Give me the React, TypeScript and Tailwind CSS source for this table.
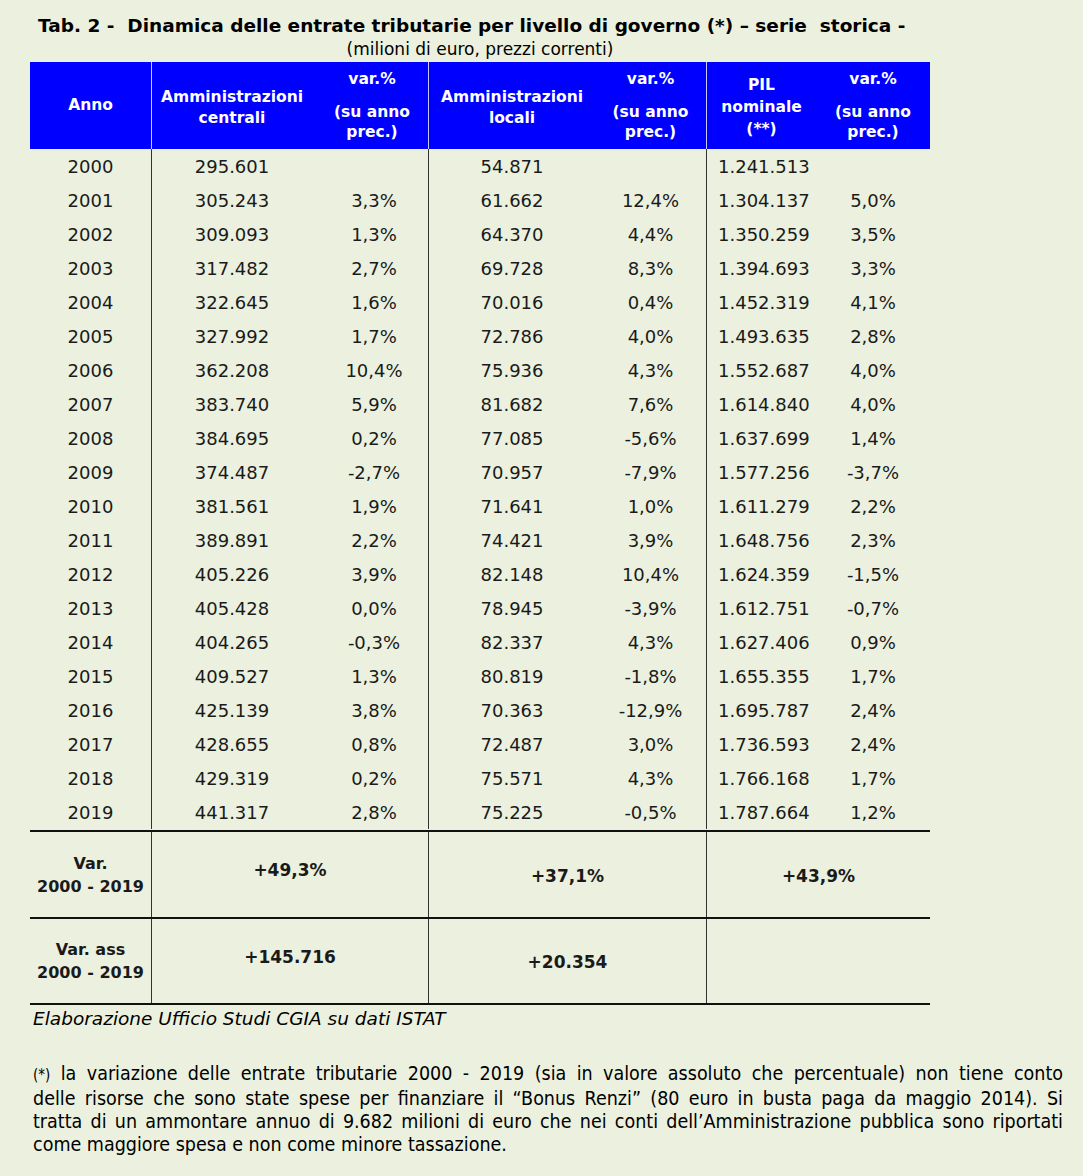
const rows: string[][] = [
  ["2000", "295.601", "", "54.871", "", "1.241.513", ""],
  ["2001", "305.243", "3,3%", "61.662", "12,4%", "1.304.137", "5,0%"],
  ["2002", "309.093", "1,3%", "64.370", "4,4%", "1.350.259", "3,5%"],
  ["2003", "317.482", "2,7%", "69.728", "8,3%", "1.394.693", "3,3%"],
  ["2004", "322.645", "1,6%", "70.016", "0,4%", "1.452.319", "4,1%"],
  ["2005", "327.992", "1,7%", "72.786", "4,0%", "1.493.635", "2,8%"],
  ["2006", "362.208", "10,4%", "75.936", "4,3%", "1.552.687", "4,0%"],
  ["2007", "383.740", "5,9%", "81.682", "7,6%", "1.614.840", "4,0%"],
  ["2008", "384.695", "0,2%", "77.085", "-5,6%", "1.637.699", "1,4%"],
  ["2009", "374.487", "-2,7%", "70.957", "-7,9%", "1.577.256", "-3,7%"],
  ["2010", "381.561", "1,9%", "71.641", "1,0%", "1.611.279", "2,2%"],
  ["2011", "389.891", "2,2%", "74.421", "3,9%", "1.648.756", "2,3%"],
  ["2012", "405.226", "3,9%", "82.148", "10,4%", "1.624.359", "-1,5%"],
  ["2013", "405.428", "0,0%", "78.945", "-3,9%", "1.612.751", "-0,7%"],
  ["2014", "404.265", "-0,3%", "82.337", "4,3%", "1.627.406", "0,9%"],
  ["2015", "409.527", "1,3%", "80.819", "-1,8%", "1.655.355", "1,7%"],
  ["2016", "425.139", "3,8%", "70.363", "-12,9%", "1.695.787", "2,4%"],
  ["2017", "428.655", "0,8%", "72.487", "3,0%", "1.736.593", "2,4%"],
  ["2018", "429.319", "0,2%", "75.571", "4,3%", "1.766.168", "1,7%"],
  ["2019", "441.317", "2,8%", "75.225", "-0,5%", "1.787.664", "1,2%"],
];

const cols = "grid grid-cols-[122px_160px_117px_166px_112px_109px_114px]";
const sumCols = "grid grid-cols-[122px_277px_278px_223px]";

const VarHead = () => (
  <div className="flex flex-col items-center pt-[7px] leading-[20px]">
    <span>var.%</span>
    <span className="mt-[13px]">(su anno</span>
    <span>prec.)</span>
  </div>
);

export default function App() {
  return (
    <div className="w-[1083px] h-[1176px] bg-[#ebf1de] text-[#1a1a1a] font-['DejaVu_Sans',sans-serif]">
      <h1 className="pl-[38px] pt-[14px] text-[18.5px] leading-[24px] font-bold text-black whitespace-pre">
        {"Tab. 2 -  Dinamica delle entrate tributarie per livello di governo (*) – serie  storica -"}
      </h1>
      <div className="w-[900px] ml-[30px]">
        <p className="text-center text-[17px] leading-[22px] text-black">(milioni di euro, prezzi correnti)</p>

        <div className={`${cols} mt-[2px] h-[87px] bg-[#0000ff] text-white font-bold text-[15.5px]`}>
          <div className="flex items-center justify-center border-r border-[#c8c8ff]">Anno</div>
          <div className="flex flex-col items-center justify-center leading-[21px] pt-[4px]">
            <span>Amministrazioni</span>
            <span>centrali</span>
          </div>
          <div className="border-r border-[#c8c8ff] pl-[4px]"><VarHead /></div>
          <div className="flex flex-col items-center justify-center leading-[21px] pt-[4px]">
            <span>Amministrazioni</span>
            <span>locali</span>
          </div>
          <div className="border-r border-[#c8c8ff]"><VarHead /></div>
          <div className="flex flex-col items-center justify-center leading-[22px] pt-[2px]">
            <span>PIL</span>
            <span>nominale</span>
            <span>(**)</span>
          </div>
          <VarHead />
        </div>

        <div className="text-[18px]">
          {rows.map((r) => (
            <div key={r[0]} className={`${cols} h-[34px] items-center`}>
              <div className="text-center h-full flex items-center justify-center border-r border-[#333]">{r[0]}</div>
              <div className="text-center">{r[1]}</div>
              <div className="text-center pl-[8px] h-full flex items-center justify-center border-r border-[#333]">{r[2]}</div>
              <div className="text-center">{r[3]}</div>
              <div className="text-center h-full flex items-center justify-center border-r border-[#333]">{r[4]}</div>
              <div className="pl-[11px]">{r[5]}</div>
              <div className="text-center">{r[6]}</div>
            </div>
          ))}
        </div>

        <div className="font-bold text-[17px] border-t-2 border-[#111] mt-[1px]">
          <div className={`${sumCols} h-[87px] border-b-2 border-[#111]`}>
            <div className="flex flex-col items-center justify-center leading-[23px] border-r border-[#333] text-[16px]">
              <span>Var.</span>
              <span>2000 - 2019</span>
            </div>
            <div className="flex items-center justify-center pb-[8px] border-r border-[#333]">+49,3%</div>
            <div className="flex items-center justify-center pt-[4px] border-r border-[#333]">+37,1%</div>
            <div className="flex items-center justify-center pt-[4px]">+43,9%</div>
          </div>
          <div className={`${sumCols} h-[86px] border-b-2 border-[#111]`}>
            <div className="flex flex-col items-center justify-center leading-[23px] border-r border-[#333] text-[16px]">
              <span>Var. ass</span>
              <span>2000 - 2019</span>
            </div>
            <div className="flex items-center justify-center pb-[6px] border-r border-[#333]">+145.716</div>
            <div className="flex items-center justify-center pt-[4px] border-r border-[#333]">+20.354</div>
            <div />
          </div>
        </div>
      </div>

      <p className="pl-[33px] pt-[2px] text-[18.5px] leading-[24px] italic text-black">
        Elaborazione Ufficio Studi CGIA su dati ISTAT
      </p>

      <div className="pl-[33px] pr-[20px] pt-[31px] text-[19.5px] leading-[23px] text-black font-['DejaVu_Sans_Condensed','Liberation_Sans_Narrow',sans-serif] [font-stretch:condensed]">
        <div className="text-justify [text-align-last:justify]">
          <span className="text-[15px]">(*)</span> la variazione delle entrate tributarie 2000 - 2019 (sia in valore assoluto che percentuale) non tiene conto
        </div>
        <div className="text-justify [text-align-last:justify]">
          delle risorse che sono state spese per finanziare il “Bonus Renzi” (80 euro in busta paga da maggio 2014). Si
        </div>
        <div className="text-justify [text-align-last:justify]">
          tratta di un ammontare annuo di 9.682 milioni di euro che nei conti dell’Amministrazione pubblica sono riportati
        </div>
        <div>come maggiore spesa e non come minore tassazione.</div>
      </div>
    </div>
  );
}
